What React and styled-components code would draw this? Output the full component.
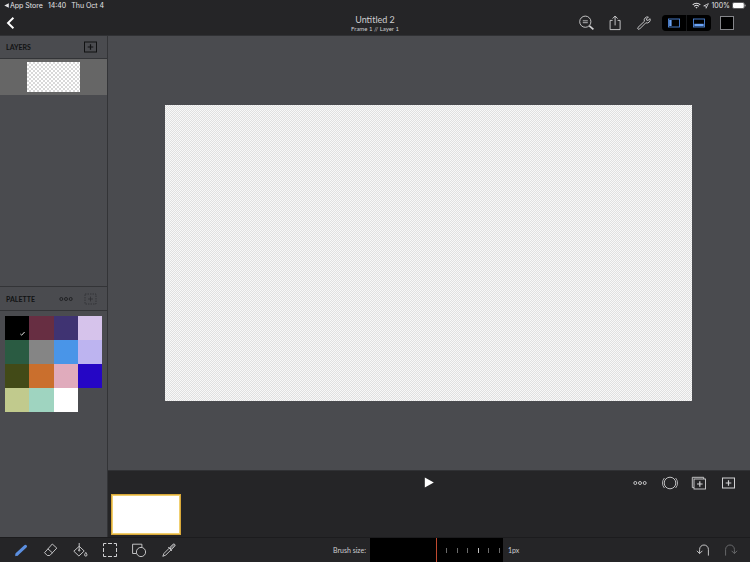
import { useState } from 'react'
import styled, { createGlobalStyle } from 'styled-components'

const GlobalStyle = createGlobalStyle`
  * {
    box-sizing: border-box;
  }

  body {
    margin: 0;
    background: #4a4b4f;
    font-family: Lato, 'Liberation Sans', sans-serif;
    font-size: 8px;
    color: #cfcfd1;
  }

  button {
    margin: 0;
    padding: 0;
    border: 0;
    background: none;
    color: inherit;
    font: inherit;
  }
`

const Page = styled.div`
  display: flex;
  flex-direction: column;
  min-height: 100vh;
`

const Header = styled.header`
  background: #252527;
  border-bottom: 1px solid #303134;
`

const StatusBar = styled.div`
  display: flex;
  justify-content: space-between;
  align-items: center;
  height: 11px;
  padding: 0 4px;
  color: #e4e4e6;
  font-family: Inter, 'Liberation Sans', sans-serif;
  font-size: 7px;
  line-height: 11px;
`

const StatusGroup = styled.div`
  display: flex;
  align-items: center;
  gap: ${({ $gap }) => $gap}px;
`

const BackToApp = styled.a`
  display: flex;
  align-items: center;
  gap: 1px;
  color: inherit;
  text-decoration: none;
`

const NavBar = styled.div`
  display: grid;
  grid-template-columns: 1fr auto 1fr;
  align-items: center;
  height: 24px;
  padding: 0 6px;
`

const TitleBlock = styled.div`
  text-align: center;
`

const Title = styled.h1`
  margin: 0;
  font-size: 9px;
  line-height: 11px;
  font-weight: 400;
`

const Subtitle = styled.p`
  margin: 0;
  font-size: 6px;
  line-height: 8px;
`

const NavActions = styled.div`
  display: flex;
  justify-content: flex-end;
  align-items: center;
  gap: 13px;
  padding-right: 10px;
`

const ViewToggle = styled.div`
  display: flex;
  gap: 1px;
  margin: 0 -4px 0 -3px;
  border-radius: 4px;
  overflow: hidden;
  background: #17181a;
`

const ToggleButton = styled.button`
  display: grid;
  place-items: center;
  width: 24px;
  height: 16px;
  background: #000;
  color: #4c83d6;
`

const CurrentColor = styled.button`
  width: 14px;
  height: 14px;
  border: 1px solid #85868a;
  background: #000;
`

const IconButton = styled.button`
  display: grid;
  place-items: center;
  flex: none;
  width: ${({ $width = 16 }) => $width}px;
  height: 16px;
  color: ${({ $color = '#d2d2d4' }) => $color};
`

const Body = styled.div`
  display: flex;
  flex: 1;
  border-bottom: 1px solid #1c1c1e;
`

const Sidebar = styled.aside`
  display: flex;
  flex-direction: column;
  flex: none;
  width: 108px;
  border-right: 1px solid #333437;
`

const LayersPanel = styled.section`
  flex: 1;
`

const PalettePanel = styled.section`
  height: 251px;
  border-top: 1px solid #333437;
`

const PanelHeader = styled.div`
  display: flex;
  align-items: center;
  gap: 8px;
  height: ${({ $height }) => $height}px;
  padding: 0 9px 0 6px;
  border-bottom: 1px solid #333437;
`

const PanelTitle = styled.h2`
  flex: 1;
  margin: 0;
  color: #111213;
  font-size: 7px;
  line-height: 10px;
  font-weight: 700;
`

const LayerRow = styled.button`
  display: grid;
  place-items: center;
  width: 100%;
  height: 36px;
  background: #666;
`

const Checker = styled.div`
  background: repeating-conic-gradient(
      ${({ $dark }) => $dark} 0 25%,
      ${({ $light }) => $light} 0 50%
    )
    0 0 / ${({ $tile }) => $tile}px ${({ $tile }) => $tile}px;
`

const LayerThumb = styled(Checker)`
  width: 53px;
  height: 30px;
`

const Swatches = styled.div`
  display: grid;
  grid-template-columns: repeat(4, 1fr);
  grid-auto-rows: 24px;
  padding: 5px;
`

const Swatch = styled.button`
  display: flex;
  justify-content: flex-end;
  align-items: flex-end;
  padding: 4px;
  background: ${({ $color }) => $color};
  color: #fff;
`

const Main = styled.main`
  display: flex;
  flex-direction: column;
  flex: 1;
  min-width: 0;
`

const Stage = styled.section`
  display: flex;
  align-items: center;
  flex: 1;
  padding: 0 58px 0 57px;
`

const Artboard = styled(Checker)`
  width: 100%;
  aspect-ratio: 16 / 9;
`

const Timeline = styled.section`
  background: #252527;
  border-top: 1px solid #303134;
`

const TimelineBar = styled.div`
  display: grid;
  grid-template-columns: 1fr auto 1fr;
  align-items: center;
  height: 23px;
`

const TimelineActions = styled.div`
  display: flex;
  justify-content: space-between;
  justify-self: end;
  grid-column: 3;
  width: 105px;
  margin-right: 13px;
`

const PlayButton = styled(IconButton)`
  grid-column: 2;
`

const Frames = styled.div`
  display: flex;
  height: 43px;
  padding: 0 3px;
`

const Frame = styled.button`
  width: 70px;
  height: 41px;
  border: 1px solid #d9a93a;
  outline: 1px solid #f0cf70;
  outline-offset: -2px;
  background: #fff;
`

const Toolbar = styled.footer`
  display: flex;
  justify-content: space-between;
  align-items: center;
  height: 24px;
  padding: 0 11px 0 13px;
  background: #252527;
`

const Tools = styled.div`
  display: flex;
  justify-content: space-between;
  width: 164px;
`

const History = styled.div`
  display: flex;
  gap: 12px;
`

const BrushSize = styled.div`
  display: flex;
  align-items: center;
  gap: 5px;
  height: 100%;
`

const BrushLabel = styled.label`
  width: 32px;
  font-size: 7px;
  white-space: nowrap;
`

const BrushValue = styled.output`
  width: 31px;
  font-size: 7px;
`

const Ruler = styled.div`
  display: grid;
  grid-template-columns: 133px;
  height: 100%;
  background: #000;

  > * {
    grid-area: 1 / 1;
  }
`

const Ticks = styled.div`
  display: flex;
  justify-content: space-between;
  align-items: center;
  padding: 0 3px 0 76px;
`

const Tick = styled.span`
  width: 1px;
  height: 5px;
  background: ${({ $major }) => ($major ? '#c4c4c4' : '#6a6a6a')};
`

const RulerInput = styled.input`
  appearance: none;
  width: 100%;
  height: 100%;
  margin: 0;
  background: transparent;

  &::-webkit-slider-thumb {
    appearance: none;
    width: 1px;
    height: 24px;
    background: #c04a30;
  }
`

const Svg = ({ w = 16, h = 16, children, ...rest }) => (
  <svg
    width={w}
    height={h}
    viewBox={`0 0 ${w} ${h}`}
    fill="none"
    stroke="currentColor"
    strokeWidth="0.9"
    aria-hidden="true"
    {...rest}
  >
    {children}
  </svg>
)

const WifiIcon = () => (
  <Svg w={9} h={7} strokeWidth="1.1">
    <path d="M0.7 2.8a5.4 5.4 0 0 1 7.6 0M2.2 4.4a3.3 3.3 0 0 1 4.6 0" />
    <path d="M3.4 5.4a1.6 1.6 0 0 1 2.2 0L4.5 6.6z" fill="currentColor" stroke="none" />
  </Svg>
)

const LocationIcon = () => (
  <Svg w={6} h={6} strokeWidth="0.7">
    <path d="M5.4 0.6 0.7 2.9h2.4v2.4z" />
  </Svg>
)

const BatteryIcon = () => (
  <Svg w={14} h={7} strokeWidth="0.5">
    <rect x="0.4" y="0.5" width="12" height="6" rx="1.5" opacity="0.6" />
    <rect x="1" y="1.1" width="10.8" height="4.8" rx="1" fill="#fff" stroke="none" />
    <path d="M13.1 2.6v1.8" strokeWidth="0.8" />
  </Svg>
)

const BackIcon = () => (
  <Svg w={9} h={14} strokeWidth="1.9">
    <path d="M7.4 1.8 2 7l5.4 5.2" />
  </Svg>
)

const ZoomIcon = () => (
  <Svg>
    <circle cx="7.3" cy="6.7" r="5.6" />
    <path d="M4.8 5.8h5M4.8 7.7h5" strokeWidth="0.8" />
    <path d="m11.4 10.8 4 3.6" strokeWidth="1.7" />
  </Svg>
)

const ShareIcon = () => (
  <Svg>
    <path d="M5.6 5.4H3.1v9.2h10V5.4h-2.5M8.1 10.4V1.2M5.6 3.6 8.1 1l2.5 2.6" />
  </Svg>
)

const WrenchIcon = () => (
  <Svg>
    <path
      d="M12.4 2a3.3 3.3 0 0 0-4 4.3L2 12.4a1.1 1.1 0 0 0 1.6 1.6l6.2-6.2a3.3 3.3 0 0 0 4.3-4.1L12 5.4l-1.3-.2-.2-1.3z"
      strokeLinejoin="round"
    />
  </Svg>
)

const SidePanelIcon = () => (
  <Svg w={12} h={10}>
    <rect x="0.5" y="1" width="11" height="8" strokeWidth="0.9" />
    <rect x="1.2" y="2" width="2.4" height="6" fill="#6ba3f5" stroke="none" />
  </Svg>
)

const BottomPanelIcon = () => (
  <Svg w={12} h={10}>
    <rect x="0.5" y="1" width="11" height="8" strokeWidth="0.9" />
    <rect x="1.3" y="5.8" width="9.4" height="2.4" fill="#6ba3f5" stroke="none" />
  </Svg>
)

const AddIcon = () => (
  <Svg w={13} h={12} strokeWidth="1">
    <rect x="0.5" y="1" width="12" height="10" />
    <path d="M6.5 3.2v5.6M3.7 6h5.6" strokeWidth="1.2" />
  </Svg>
)

const DashedAddIcon = () => (
  <Svg w={13} h={12} strokeWidth="0.8">
    <rect x="1" y="1" width="11" height="10" strokeDasharray="1.5 1" />
    <path d="M6.5 3.6v4.8M4.1 6h4.8" />
  </Svg>
)

const DotsIcon = () => (
  <Svg w={14} h={6}>
    <circle cx="2.3" cy="3" r="1.5" />
    <circle cx="7" cy="3" r="1.5" />
    <circle cx="11.7" cy="3" r="1.5" />
  </Svg>
)

const CheckIcon = () => (
  <Svg w={5} h={5} strokeWidth="0.9">
    <path d="m0.4 3 1.2 1.2L4.6 1" />
  </Svg>
)

const PlayIcon = () => (
  <Svg w={10} h={11}>
    <path d="M0.8 0.4v10.2l9-5.1z" fill="#fff" stroke="none" />
  </Svg>
)

const OnionIcon = () => (
  <Svg>
    <circle cx="8" cy="8" r="5.8" />
    <path d="M2.4 3a7.4 7.4 0 0 0 0 10M13.6 3a7.4 7.4 0 0 1 0 10" strokeWidth="0.8" />
  </Svg>
)

const DuplicateIcon = () => (
  <Svg>
    <path d="M3 12.6H1.3V2.3h11.4V4" />
    <rect x="3" y="4" width="11.5" height="10" />
    <path d="M8.8 6.2v5.6M6 9h5.6" strokeWidth="1.2" />
  </Svg>
)

const BrushIcon = () => (
  <Svg>
    <path d="m4 12.1 8.4-7.7" strokeWidth="3.2" strokeLinecap="round" />
    <path d="M2 14.2 3.2 10.7 5.6 13.1z" fill="currentColor" stroke="none" />
  </Svg>
)

const EraserIcon = () => (
  <Svg>
    <path d="M9.3 2 13.8 6.1 6.8 13.5H4.3L1.5 10.7zM4.9 6.9l4.6 4" strokeLinejoin="round" />
  </Svg>
)

const BucketIcon = () => (
  <Svg>
    <path d="M7.2 4.3 12.2 9l-5.3 5L1.8 9.2zM7.2 1v7.2" />
    <circle cx="7.2" cy="8.4" r="0.7" />
    <path d="M13.8 10.4c.8 1.3 1.2 2 1.2 2.5a1.2 1.2 0 0 1-2.4 0c0-.5.4-1.2 1.2-2.5z" />
  </Svg>
)

const SelectIcon = () => (
  <Svg strokeWidth="1">
    <path d="M1.5 4.2V1.5h2.8M6 1.5h4M11.8 1.5h2.7v2.7M14.5 6v4M14.5 11.8v2.7h-2.7M10 14.5H6M4.3 14.5H1.5v-2.7M1.5 10V6" />
  </Svg>
)

const ShapesIcon = () => (
  <Svg>
    <path d="M5.3 11.5H1.6V2.2h9.3v3" />
    <circle cx="10" cy="10" r="4.6" />
  </Svg>
)

const DropperIcon = () => (
  <Svg>
    <path d="M8.2 6.2 3 11.4l-1.2 2.9 2.9-1.2 5.3-5.2M7.2 5.2l3.8 3.7" />
    <path
      d="m8.6 5.6 1.5-1.1 1.2-1.6c.7-.9 1.7-1.2 2.4-.5s.4 1.7-.5 2.4l-1.5 1.3-1.1 1.5z"
      fill="currentColor"
      fillOpacity="0.4"
    />
  </Svg>
)

const UndoIcon = () => (
  <Svg>
    <path d="M13.4 13.6V7.4a4.4 4.4 0 0 0-8.8 0v4M1.9 8.8l2.7 2.8 2.8-2.8" />
  </Svg>
)

const RedoIcon = () => (
  <Svg>
    <path d="M2.6 13.6V7.4a4.4 4.4 0 0 1 8.8 0v4M14.1 8.8l-2.7 2.8-2.8-2.8" />
  </Svg>
)

const colors = [
  '#000000', '#672e42', '#3f3372', '#d6c3eb',
  '#2a5b42', '#858585', '#4995e8', '#bdb4f0',
  '#424a17', '#ca6f2d', '#e0abbc', '#2506c5',
  '#c1ca8d', '#9fd4c0', '#ffffff',
]

const tools = [
  { name: 'Brush', icon: BrushIcon },
  { name: 'Eraser', icon: EraserIcon },
  { name: 'Fill', icon: BucketIcon },
  { name: 'Select', icon: SelectIcon },
  { name: 'Shapes', icon: ShapesIcon },
  { name: 'Eyedropper', icon: DropperIcon },
]

const App = () => {
  const [tool, setTool] = useState('Brush')
  const [color, setColor] = useState(colors[0])
  const [ruler, setRuler] = useState(50)

  return (
    <Page>
      <GlobalStyle />
      <Header>
        <StatusBar>
          <StatusGroup $gap={5}>
            <BackToApp href="#">
              <Svg w={5} h={5}>
                <path d="M4.8 0.2v4.6L0.3 2.5z" fill="currentColor" stroke="none" />
              </Svg>
              App Store
            </BackToApp>
            <span>14:40</span>
            <span>Thu Oct 4</span>
          </StatusGroup>
          <StatusGroup $gap={2}>
            <WifiIcon />
            <LocationIcon />
            <span>100%</span>
            <BatteryIcon />
          </StatusGroup>
        </StatusBar>
        <NavBar>
          <IconButton $width={9} $color="#fff" aria-label="Back">
            <BackIcon />
          </IconButton>
          <TitleBlock>
            <Title>Untitled 2</Title>
            <Subtitle>Frame 1 // Layer 1</Subtitle>
          </TitleBlock>
          <NavActions>
            <IconButton aria-label="Zoom"><ZoomIcon /></IconButton>
            <IconButton aria-label="Share"><ShareIcon /></IconButton>
            <IconButton aria-label="Settings"><WrenchIcon /></IconButton>
            <ViewToggle>
              <ToggleButton aria-label="Toggle side panel"><SidePanelIcon /></ToggleButton>
              <ToggleButton aria-label="Toggle timeline"><BottomPanelIcon /></ToggleButton>
            </ViewToggle>
            <CurrentColor aria-label="Current color" />
          </NavActions>
        </NavBar>
      </Header>

      <Body>
        <Sidebar>
          <LayersPanel>
            <PanelHeader $height={23}>
              <PanelTitle>LAYERS</PanelTitle>
              <IconButton $color="#111213" aria-label="Add layer"><AddIcon /></IconButton>
            </PanelHeader>
            <LayerRow aria-label="Layer 1">
              <LayerThumb $dark="#d8d8d8" $light="#ffffff" $tile={4} />
            </LayerRow>
          </LayersPanel>
          <PalettePanel>
            <PanelHeader $height={24}>
              <PanelTitle>PALETTE</PanelTitle>
              <IconButton $color="#1c1d1f" aria-label="Palette options"><DotsIcon /></IconButton>
              <IconButton $color="#2e2f32" aria-label="Add color"><DashedAddIcon /></IconButton>
            </PanelHeader>
            <Swatches>
              {colors.map((c) => (
                <Swatch key={c} $color={c} aria-label={c} onClick={() => setColor(c)}>
                  {c === color && <CheckIcon />}
                </Swatch>
              ))}
            </Swatches>
          </PalettePanel>
        </Sidebar>

        <Main>
          <Stage>
            <Artboard $dark="#e0e0e0" $light="#f8f8f8" $tile={2} />
          </Stage>
          <Timeline>
            <TimelineBar>
              <PlayButton aria-label="Play"><PlayIcon /></PlayButton>
              <TimelineActions>
                <IconButton aria-label="Frame options"><DotsIcon /></IconButton>
                <IconButton aria-label="Onion skin"><OnionIcon /></IconButton>
                <IconButton aria-label="Duplicate frame"><DuplicateIcon /></IconButton>
                <IconButton aria-label="Add frame"><AddIcon /></IconButton>
              </TimelineActions>
            </TimelineBar>
            <Frames>
              <Frame aria-label="Frame 1" />
            </Frames>
          </Timeline>
        </Main>
      </Body>

      <Toolbar>
        <Tools>
          {tools.map(({ name, icon: Icon }) => (
            <IconButton
              key={name}
              aria-label={name}
              $color={name === tool ? '#5b8fe0' : undefined}
              onClick={() => setTool(name)}
            >
              <Icon />
            </IconButton>
          ))}
        </Tools>
        <BrushSize>
          <BrushLabel htmlFor="brush-size">Brush size:</BrushLabel>
          <Ruler>
            <Ticks>
              {[0, 1, 2, 3, 4, 5].map((i) => (
                <Tick key={i} $major={i === 3} />
              ))}
            </Ticks>
            <RulerInput
              id="brush-size"
              type="range"
              value={ruler}
              onChange={(e) => setRuler(Number(e.target.value))}
            />
          </Ruler>
          <BrushValue htmlFor="brush-size">1px</BrushValue>
        </BrushSize>
        <History>
          <IconButton aria-label="Undo"><UndoIcon /></IconButton>
          <IconButton $color="#6d6e71" aria-label="Redo"><RedoIcon /></IconButton>
        </History>
      </Toolbar>
    </Page>
  )
}

export default App
